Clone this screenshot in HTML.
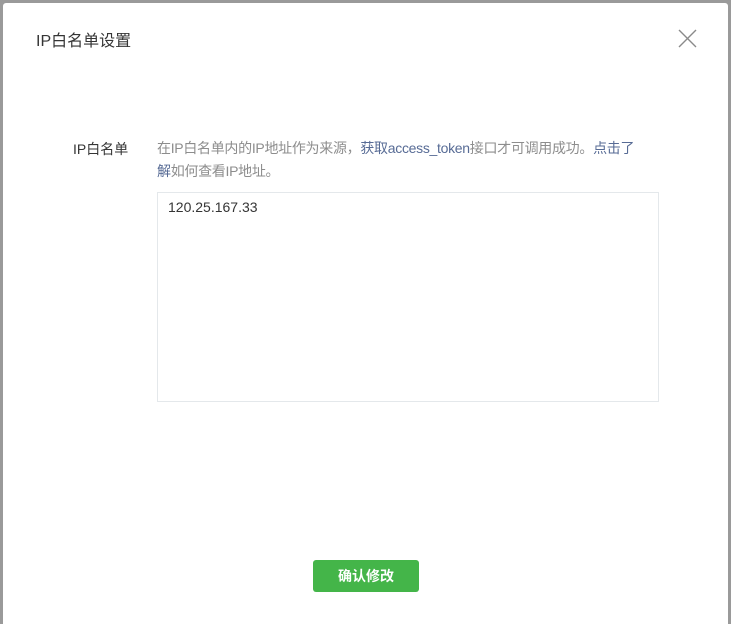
<!DOCTYPE html>
<html><head><meta charset="utf-8"><style>
html,body{margin:0;padding:0;width:731px;height:624px;overflow:hidden;background:#9a9a9a;font-family:"Liberation Sans","Noto Sans CJK SC",sans-serif;}
.modal{position:absolute;left:3px;top:3px;width:725px;height:621px;background:#fff;border-radius:3px 3px 0 0;}
.title{position:absolute;left:33px;top:24px;font-size:16px;color:#353535;}
.close{position:absolute;left:675px;top:26px;}
.label{position:absolute;left:70px;top:136px;font-size:14px;color:#353535;}
.tip{position:absolute;left:154px;top:134px;width:488px;font-size:14px;line-height:23px;color:#8d8d8d;letter-spacing:-0.3px;}
.tip a{color:#576b95;text-decoration:none;}
.box{position:absolute;left:154px;top:189px;width:502px;height:210px;border:1px solid #e4e8eb;font-size:14px;color:#353535;padding:6px 10px;box-sizing:border-box;}
.btn{position:absolute;left:310px;top:557px;width:106px;height:32px;background:#44b549;border-radius:3px;color:#fff;font-size:14px;line-height:32px;text-align:center;font-weight:bold;}
</style></head><body>
<div class="modal">
<div class="title">IP白名单设置</div>
<svg class="close" width="19" height="19" viewBox="0 0 19 19"><path d="M1 1L18 18M18 1L1 18" stroke="#8a8a8a" stroke-width="1.4" fill="none"/></svg>
<div class="label">IP白名单</div>
<div class="tip">在IP白名单内的IP地址作为来源，<a>获取access_token</a>接口才可调用成功。<a>点击了解</a>如何查看IP地址。</div>
<div class="box">120.25.167.33</div>
<div class="btn">确认修改</div>
</div>
</body></html>
